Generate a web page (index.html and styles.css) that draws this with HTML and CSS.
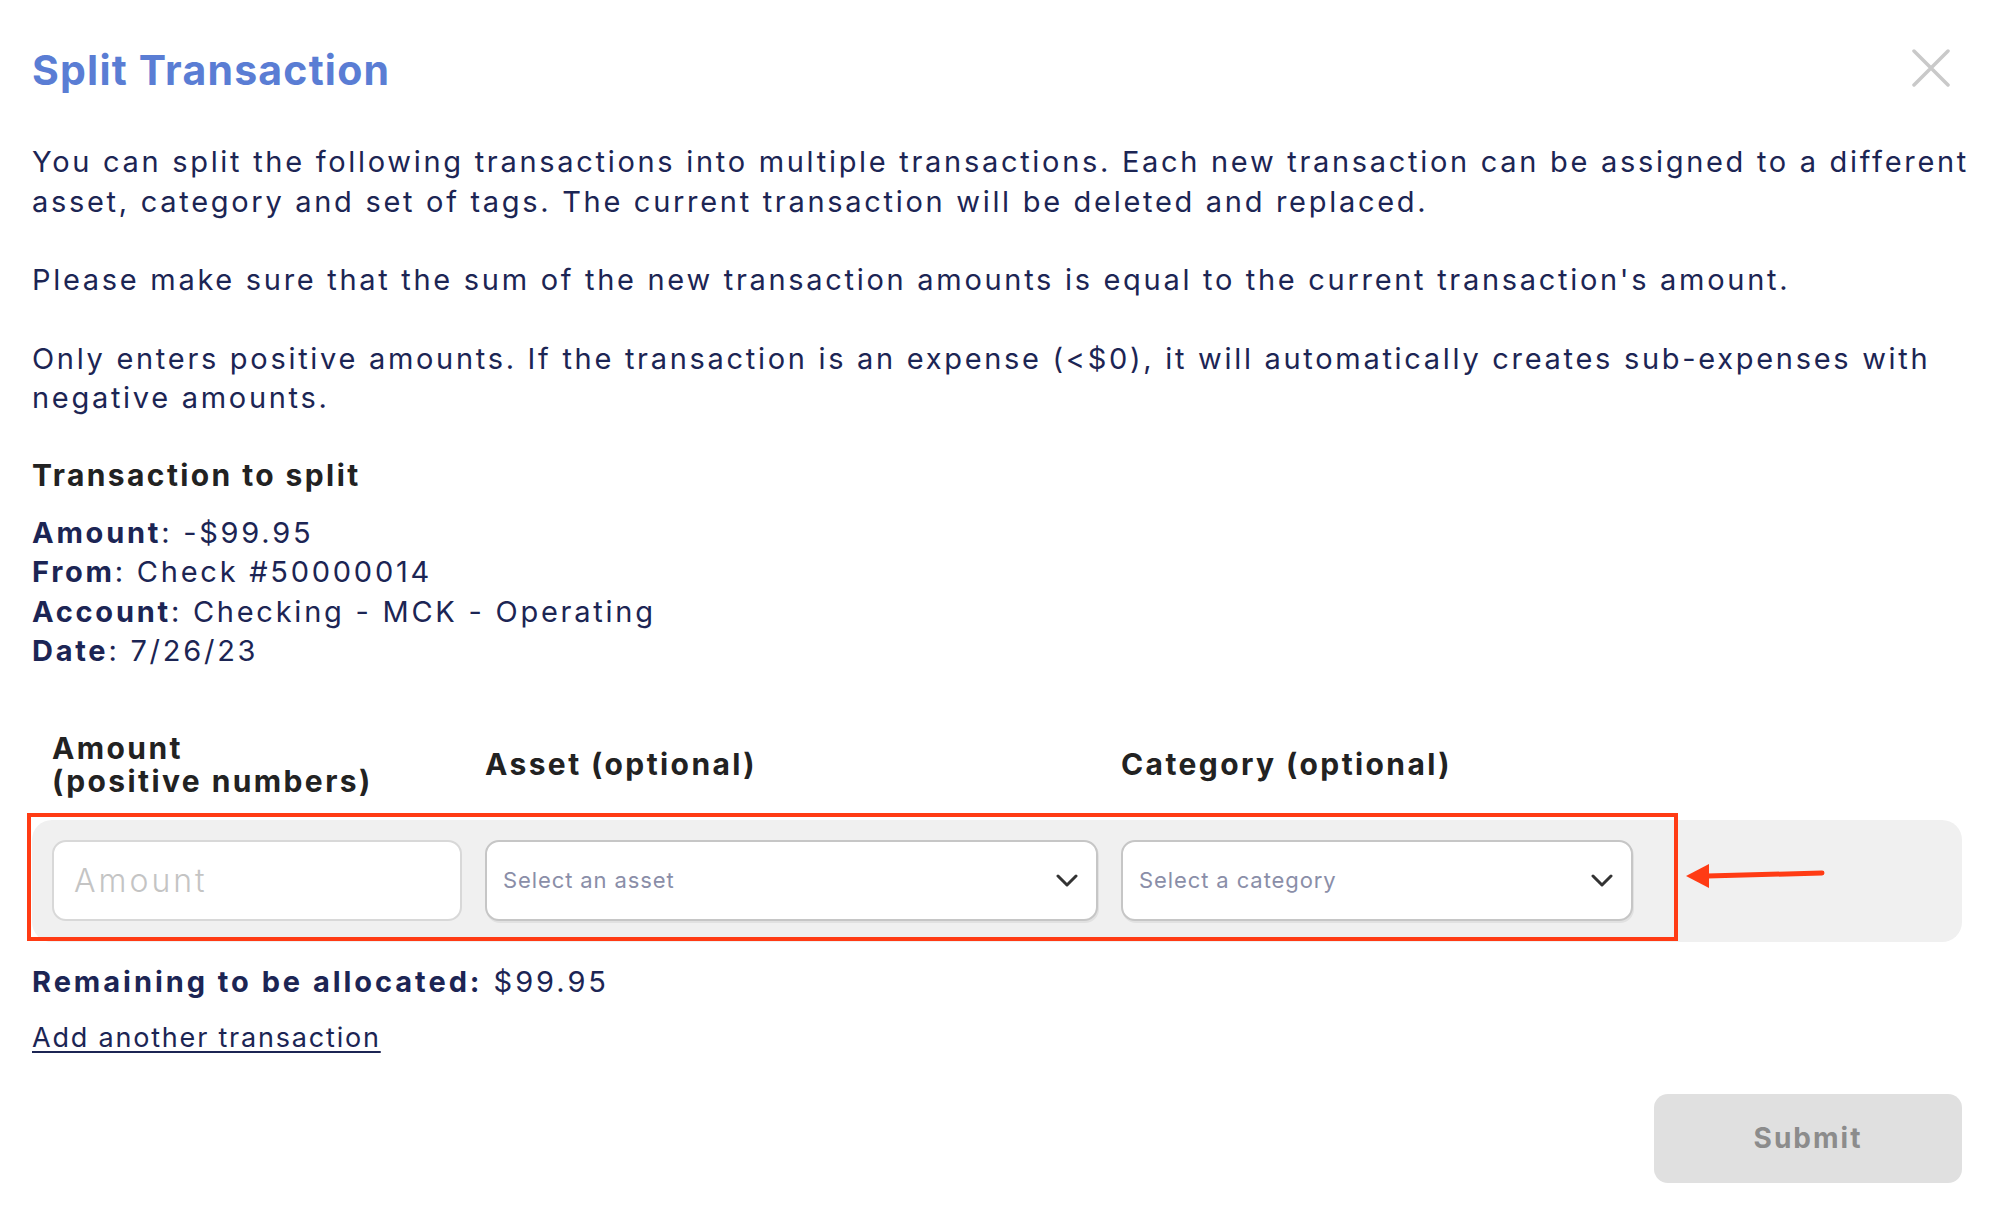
FILE: index.html
```html
<!DOCTYPE html>
<html lang="en">
<head>
  <meta charset="UTF-8" />
  <meta name="viewport" content="width=device-width, initial-scale=1.0" />
  <title>Split Transaction</title>
  <link rel="stylesheet" href="styles.css">
</head>
<body>
  <div class="modal">
    <header class="modal-header">
      <h1 class="modal-title">Split Transaction</h1>
      <button class="close-btn" aria-label="Close">
        <svg width="38" height="38" viewBox="0 0 38 38">
          <path d="M2 2 L36 36 M36 2 L2 36" stroke="#c9c9c9" stroke-width="3.5" stroke-linecap="round" />
        </svg>
      </button>
    </header>

    <div class="intro">
      <p>You can split the following transactions into multiple transactions. Each new transaction can be assigned to a different asset, category and set of tags. The current transaction will be deleted and replaced.</p>
      <p>Please make sure that the sum of the new transaction amounts is equal to the current transaction's amount.</p>
      <p>Only enters positive amounts. If the transaction is an expense (&lt;$0), it will automatically creates sub-expenses with negative amounts.</p>
    </div>

    <section class="source">
      <h2 class="source-title">Transaction to split</h2>
      <ul class="details">
        <li><b>Amount</b>: -$99.95</li>
        <li><b>From</b>: Check #50000014</li>
        <li><b>Account</b>: Checking - MCK - Operating</li>
        <li><b>Date</b>: 7/26/23</li>
      </ul>
    </section>

    <div class="split">
      <div class="split-head">
        <div class="col-label">Amount<br>(positive numbers)</div>
        <div class="col-label">Asset (optional)</div>
        <div class="col-label">Category (optional)</div>
      </div>
      <div class="split-row">
        <input class="field amount-input" type="text" placeholder="Amount">
        <div class="field select">
          <span>Select an asset</span>
          <svg class="chevron" width="22" height="13" viewBox="0 0 22 13"><path d="M2 2 L11 11 L20 2" fill="none" stroke="#333" stroke-width="3" stroke-linecap="round" stroke-linejoin="round" /></svg>
        </div>
        <div class="field select">
          <span>Select a category</span>
          <svg class="chevron" width="22" height="13" viewBox="0 0 22 13"><path d="M2 2 L11 11 L20 2" fill="none" stroke="#333" stroke-width="3" stroke-linecap="round" stroke-linejoin="round" /></svg>
        </div>
        <!-- annotation overlay -->
        <div class="highlight"></div>
        <svg class="pointer" width="150" height="34" viewBox="0 0 150 34">
          <path d="M25 17 L140 14" stroke="#ff3b14" stroke-width="5" stroke-linecap="round" />
          <polygon points="4,17 27,5 27,29" fill="#ff3b14" />
        </svg>
      </div>
    </div>

    <p class="remaining"><b>Remaining to be allocated:</b> $99.95</p>
    <a class="add-link" href="#">Add another transaction</a>

    <div class="actions">
      <button class="submit" disabled>Submit</button>
    </div>
  </div>
</body>
</html>
```

FILE: styles.css
```css
:root {
  --text-color: #1c2554;
  --title-color: #5a7dd4;
  --heading-color: #222222;
  --border-color: #cfcfcf;
  --row-bg: #f0f0f0;
  --mark-color: #ff3b14;
}

* {
  margin: 0;
  padding: 0;
  box-sizing: border-box;
  font-family: "Inter", "Noto Sans", sans-serif;
}

body {
  background: #ffffff;
  color: var(--text-color);
}

.modal {
  width: 2000px;
  padding: 46px 30px 0 32px;
}

.modal-header {
  display: flex;
  justify-content: space-between;
  align-items: center;
  padding-right: 20px;
}

.modal-title {
  color: var(--title-color);
  font-size: 41px;
  line-height: 48px;
  font-weight: 700;
  letter-spacing: 1.2px;
}

.close-btn {
  background: none;
  border: none;
  display: flex;
  margin-top: -4px;
}

.intro {
  margin-top: 48px;
  margin-right: -26px;
  font-size: 29px;
  line-height: 39.5px;
  letter-spacing: 2.7px;
}

.intro p + p {
  margin-top: 39px;
}

.source {
  margin-top: 39px;
}

.source-title {
  color: var(--heading-color);
  font-size: 30px;
  line-height: 36px;
  font-weight: 700;
  letter-spacing: 2.4px;
}

.details {
  list-style: none;
  margin-top: 20px;
  font-size: 29px;
  line-height: 39.5px;
  letter-spacing: 2.75px;
}

.details b,
.remaining b {
  font-weight: 700;
}

.split {
  margin-top: 61px;
  width: 1930px;
}

.split-head,
.split-row {
  display: grid;
  grid-template-columns: 410px 613px 512px;
  column-gap: 23px;
  padding: 0 20px;
}

.split-head {
  align-items: center;
}

.col-label {
  color: var(--heading-color);
  font-size: 30px;
  line-height: 33px;
  font-weight: 700;
  letter-spacing: 2.4px;
}

.split-row {
  position: relative;
  margin-top: 22px;
  padding-top: 20px;
  padding-bottom: 21px;
  background: var(--row-bg);
  border-radius: 20px;
}

.field {
  height: 81px;
  background: #ffffff;
  border: 2px solid var(--border-color);
  border-radius: 14px;
}

.amount-input {
  padding: 0 20px;
  font-size: 32px;
  font-weight: 300;
  color: var(--text-color);
  outline: none;
  border-color: #d8d8d8;
}

.amount-input::placeholder {
  color: #c4c4c4;
  letter-spacing: 3px;
}

.select {
  display: flex;
  align-items: center;
  justify-content: space-between;
  padding: 0 16px 0 16px;
  border-color: #c6c6c6;
  box-shadow: 1px 2px 0 rgba(0, 0, 0, 0.06);
  font-size: 22px;
  color: #8a8ea8;
  letter-spacing: 0.9px;
}

.chevron {
  margin-right: 2px;
}

.highlight {
  position: absolute;
  left: -5px;
  top: -7px;
  width: 1651px;
  height: 128px;
  border: 4px solid var(--mark-color);
  pointer-events: none;
}

.pointer {
  position: absolute;
  left: 1650px;
  top: 39px;
}

.remaining {
  margin-top: 20px;
  font-size: 29px;
  line-height: 39.5px;
  letter-spacing: 2.95px;
}

.add-link {
  display: inline-block;
  margin-top: 17px;
  font-size: 27px;
  line-height: 39.5px;
  letter-spacing: 1.8px;
  color: var(--text-color);
  text-decoration: underline;
  text-decoration-thickness: 2px;
  text-underline-offset: 4px;
}

.actions {
  display: flex;
  justify-content: flex-end;
  width: 1930px;
  margin-top: 36px;
}

.submit {
  width: 308px;
  height: 89px;
  border: none;
  border-radius: 14px;
  background: #e0e0e0;
  color: #8c8c8c;
  font-size: 28px;
  font-weight: 700;
  letter-spacing: 2px;
}
```
